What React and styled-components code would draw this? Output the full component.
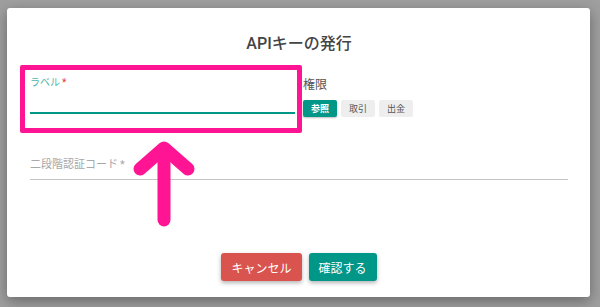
import React from "react";
import styled, { createGlobalStyle } from "styled-components";

const GlobalStyle = createGlobalStyle`
  html, body {
    margin: 0;
    padding: 0;
    background: #9f9f9f;
  }
  body {
    font-family: Roboto, "Noto Sans CJK JP", sans-serif;
  }
`;

const ACCENT = "#009688";
const PINK = "#ff1493";

// style
const Page = styled.main`
  position: relative;
  width: 600px;
  height: 307px;
  overflow: hidden;
  background: #9f9f9f;
`;

const Dialog = styled.section`
  position: absolute;
  left: 7px;
  top: 8px;
  width: 583px;
  height: 289px;
  box-sizing: border-box;
  padding: 26px 22px 16px 23px;
  background: #fff;
  border-radius: 3px;
  box-shadow: 0 4px 14px rgba(0, 0, 0, 0.35);
  display: flex;
  flex-direction: column;
`;

const Title = styled.h2`
  margin: 0;
  font-size: 16px;
  line-height: 20px;
  font-weight: 500;
  color: #444;
  text-align: center;
`;

const Row = styled.div`
  display: grid;
  grid-template-columns: 265px 265px;
  column-gap: 8px;
  margin-top: ${(p) => p.$top}px;
`;

const Field = styled.div`
  display: flex;
  flex-direction: column;
  grid-column: ${(p) => (p.$wide ? "1 / -1" : "auto")};
`;

const Label = styled.label`
  font-size: ${(p) => (p.$active ? 10 : 11)}px;
  line-height: 12px;
  color: ${(p) => (p.$active ? "#4db6ac" : "#a8a8a8")};
  span {
    color: ${(p) => (p.$active ? "#e53935" : "#a8a8a8")};
    margin-left: 2px;
  }
`;

const Input = styled.div`
  height: ${(p) => p.$h}px;
  border-bottom: ${(p) => (p.$active ? `2px solid ${ACCENT}` : "1px solid #c4c4c4")};
`;

const Group = styled.div`
  display: flex;
  flex-direction: column;
  gap: 7px;
`;

const GroupTitle = styled.div`
  font-size: 12px;
  line-height: 16px;
  color: #555;
`;

const Chips = styled.div`
  display: flex;
  gap: 4px;
`;

const Chip = styled.span`
  width: 34px;
  height: 17px;
  border-radius: 2px;
  display: flex;
  align-items: center;
  justify-content: center;
  font-size: 9px;
  font-weight: ${(p) => (p.$on ? 700 : 400)};
  background: ${(p) => (p.$on ? ACCENT : "#eeeeee")};
  color: ${(p) => (p.$on ? "#fff" : "#555")};
  box-shadow: ${(p) => (p.$on ? "0 1px 2px rgba(0,0,0,0.25)" : "none")};
`;

const Actions = styled.div`
  margin-top: auto;
  display: flex;
  justify-content: center;
  gap: 7px;
`;

const Button = styled.button`
  height: 28px;
  padding: 0 10px;
  border: none;
  border-radius: 3px;
  font-family: inherit;
  font-size: 12px;
  color: #fff;
  background: ${(p) => p.$bg};
  box-shadow: 0 2px 4px rgba(0, 0, 0, 0.3);
`;

const Highlight = styled.div`
  position: absolute;
  left: 20px;
  top: 65px;
  width: 282px;
  height: 68px;
  box-sizing: border-box;
  border: 5px solid ${PINK};
  border-radius: 2px;
`;

const Arrow = styled.svg`
  position: absolute;
  left: 120px;
  top: 130px;
`;

const App = () => {
  return (
    <Page>
      <GlobalStyle />
      <Dialog>
        <Title>APIキーの発行</Title>
        <Row $top={23}>
          <Field>
            <Label $active>
              ラベル<span>*</span>
            </Label>
            <Input $active $h={23} />
          </Field>
          <Group>
            <GroupTitle>権限</GroupTitle>
            <Chips>
              <Chip $on>参照</Chip>
              <Chip>取引</Chip>
              <Chip>出金</Chip>
            </Chips>
          </Group>
        </Row>
        <Row $top={42}>
          <Field $wide>
            <Label>
              二段階認証コード<span>*</span>
            </Label>
            <Input $h={8} />
          </Field>
        </Row>
        <Actions>
          <Button $bg="#d9534f">キャンセル</Button>
          <Button $bg={ACCENT}>確認する</Button>
        </Actions>
      </Dialog>
      <Highlight />
      {/* annotation arrow */}
      <Arrow width="90" height="110" viewBox="0 0 90 110">
        <g stroke={PINK} strokeWidth="13" strokeLinecap="round" strokeLinejoin="round" fill="none">
          <polyline points="20,39 44,18 68,39" />
          <line x1="44" y1="20" x2="44" y2="90" />
        </g>
      </Arrow>
    </Page>
  );
};

export default App;
